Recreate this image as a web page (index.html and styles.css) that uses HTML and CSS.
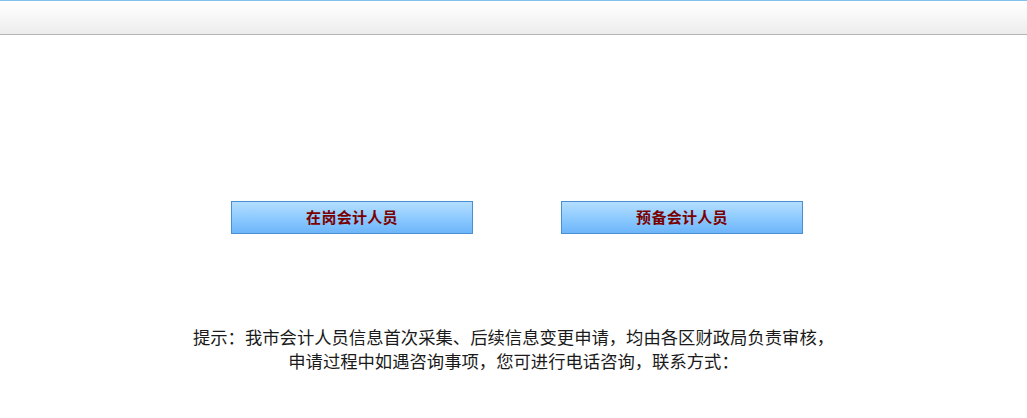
FILE: index.html
```html
<!DOCTYPE html>
<html lang="zh-CN">
<head>
<meta charset="utf-8">
<title>会计人员信息采集</title>
<link rel="stylesheet" href="styles.css">
</head>
<body>
<div class="topbar"></div>
<main class="main">
  <div class="buttons">
    <a class="btn" href="#">在岗会计人员</a>
    <a class="btn" href="#">预备会计人员</a>
  </div>
  <div class="tip">
    <p>提示：我市会计人员信息首次采集、后续信息变更申请，均由各区财政局负责审核，</p>
    <p>申请过程中如遇咨询事项，您可进行电话咨询，联系方式：</p>
  </div>
</main>
</body>
</html>
```
FILE: styles.css
```css
html, body {
  margin: 0;
  padding: 0;
  background: #fff;
  font-family: "Microsoft YaHei", "Noto Sans CJK SC", "Noto Sans", sans-serif;
}
.topbar {
  height: 33px;
  border-top: 1px solid #7fc2ec;
  border-bottom: 1px solid #b4b4b4;
  background: linear-gradient(to bottom, #ffffff 0%, #f9f9f9 40%, #ececec 100%);
}
.main {
  padding-top: 166px;
}
.buttons {
  display: flex;
  justify-content: center;
  gap: 88px;
  padding-left: 7px;
}
.btn {
  box-sizing: border-box;
  width: 242px;
  height: 33px;
  padding-bottom: 2px;
  display: flex;
  align-items: center;
  justify-content: center;
  border: 1px solid #4a8fd2;
  background: linear-gradient(to bottom, #b4deff 0%, #8ecbff 50%, #6db5fa 100%);
  color: #7a0000;
  font-weight: bold;
  font-size: 15px;
  letter-spacing: 0.3px;
  text-decoration: none;
}
.tip {
  margin-top: 91px;
  text-align: center;
  font-size: 13pt;
  line-height: 24px;
  color: #1a1a1a;
}
.tip p {
  margin: 0;
}
```
